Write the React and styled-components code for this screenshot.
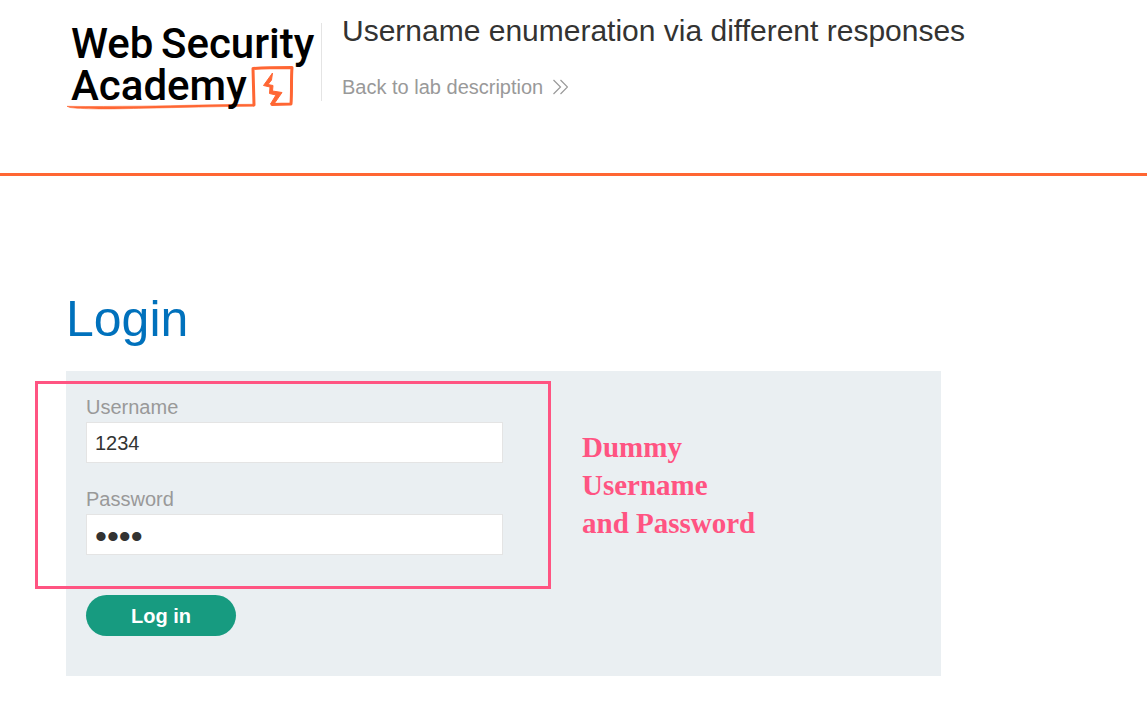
import React from "react";
import styled, { createGlobalStyle } from "styled-components";

const GlobalStyle = createGlobalStyle`
  *, *::before, *::after { box-sizing: border-box; }
  body {
    margin: 0;
    background: #fff;
    color: #333332;
    font-family: "Liberation Sans", Arial, sans-serif;
    font-size: 20px;
  }
`;

const Header = styled.header`
  display: flex;
  align-items: flex-start;
  min-height: 176px;
  padding: 11px 66px 0;
  border-bottom: 3px solid #ff6633;
`;

const LogoLink = styled.a`
  display: block;
  flex: none;
  padding-top: 7px;
`;

const LogoDrawing = styled.svg`
  display: block;
  width: 255px;
  height: 96px;
`;

const Divider = styled.div`
  flex: none;
  width: 1px;
  height: 78px;
  margin: 12px 20px 0 0;
  background: #e4e4e4;
`;

const LabInfo = styled.div`
  display: flex;
  flex-direction: column;
  align-items: flex-start;
  gap: 24px;
`;

const LabTitle = styled.h2`
  margin: 0;
  font-size: 30px;
  font-weight: 400;
  line-height: 40px;
`;

const BackLink = styled.a`
  display: flex;
  align-items: center;
  gap: 10px;
  color: #999;
  line-height: 24px;
  text-decoration: none;
`;

const Main = styled.main`
  padding: 113px 66px 36px;
`;

const PageTitle = styled.h1`
  margin: 0 0 22px;
  color: #0071bc;
  font-size: 50px;
  font-weight: 400;
  line-height: 60px;
`;

const Panel = styled.section`
  position: relative;
  max-width: 875px;
  padding: 20px 20px 40px;
  background: #eaeff2;
`;

const LoginForm = styled.form`
  display: flex;
  flex-direction: column;
  align-items: flex-start;
  gap: 20px;
`;

const Field = styled.div`
  width: 100%;
  max-width: 417px;
`;

const Label = styled.label`
  display: block;
  padding-top: 2px;
  color: #999;
  line-height: 29px;
`;

const TextInput = styled.input`
  display: block;
  width: 100%;
  height: 41px;
  padding: 2px 8px 0;
  border: 1px solid #e4e4e4;
  border-radius: 0;
  background: #fff;
  color: #333332;
  font: inherit;
  outline: none;

  &[type="password"] {
    padding-top: 4px;
    font-size: 34px;
    line-height: 34px;
  }
`;

const SubmitButton = styled.button`
  width: 150px;
  height: 41px;
  margin-top: 20px;
  padding: 2px 0 0;
  border: 0;
  border-radius: 21px;
  background: #179b80;
  color: #fff;
  font: inherit;
  font-weight: 700;
  cursor: pointer;
`;

const Highlight = styled.div`
  position: absolute;
  top: 10px;
  left: -31px;
  width: 516px;
  height: 208px;
  border: 3px solid #ff5482;
  pointer-events: none;
`;

const Note = styled.p`
  position: absolute;
  top: 57px;
  left: 516px;
  margin: 0;
  color: #ff5482;
  font-family: "Liberation Serif", "Times New Roman", serif;
  font-size: 29px;
  font-weight: 700;
  line-height: 38px;
`;

function Logo() {
  return (
    <LogoDrawing viewBox="0 0 255 96" role="img" aria-label="Web Security Academy">
      <path
        d="M1 88.300C25 88.800 50 88.200 75 88.200C115 87.600 150 86.500 188 86.300L188 88.200C150 88.500 115 89.500 78 90.200C50 91 20 91.500 4 89.500Z"
        fill="#ff6633" stroke="#ff6633" strokeWidth="0.600" strokeLinejoin="round"
      />
      <path
        d="M188 87L187 50.500C200 49.500 214 49.500 226 49.500C225 61 226 74 225 86L206 86.500"
        fill="none" stroke="#ff6633" strokeWidth="3" strokeLinejoin="round" strokeLinecap="round"
      />
      <path
        d="M206.500 55L205.500 62L202 66.500L207 67.500L206.500 73L216 74.500L208 86L204.500 86L210 77L203.500 75.500L204 69L197.500 67.500Z"
        fill="#ff6633" stroke="#ff6633" strokeWidth="1" strokeLinejoin="round"
      />
      <g fontFamily="Roboto, sans-serif" fontSize="42" fontWeight="500" fill="#000">
        <text x="5" y="40">Web</text>
        <text x="95" y="40">Security</text>
        <text x="5" y="82">Academy</text>
      </g>
    </LogoDrawing>
  );
}

function Chevrons() {
  return (
    <svg width="15" height="16" viewBox="0 0 15 16" fill="none" stroke="#999" strokeWidth="1.200" aria-hidden="true">
      <path d="M0.500 1L7.500 8L0.500 15M7.500 1L14.500 8L7.500 15" />
    </svg>
  );
}

export default function App() {
  return (
    <>
      <GlobalStyle />
      <Header>
        <LogoLink href="#home"><Logo /></LogoLink>
        <Divider />
        <LabInfo>
          <LabTitle>Username enumeration via different responses</LabTitle>
          <BackLink href="#lab">Back to lab description <Chevrons /></BackLink>
        </LabInfo>
      </Header>
      <Main>
        <PageTitle>Login</PageTitle>
        <Panel>
          <LoginForm onSubmit={(event) => event.preventDefault()}>
            <Field>
              <Label htmlFor="username">Username</Label>
              <TextInput id="username" name="username" defaultValue="1234" />
            </Field>
            <Field>
              <Label htmlFor="password">Password</Label>
              <TextInput id="password" name="password" type="password" defaultValue="1234" />
            </Field>
            <SubmitButton type="submit">Log in</SubmitButton>
          </LoginForm>
          <Highlight />
          <Note>Dummy<br />Username<br />and Password</Note>
        </Panel>
      </Main>
    </>
  );
}
